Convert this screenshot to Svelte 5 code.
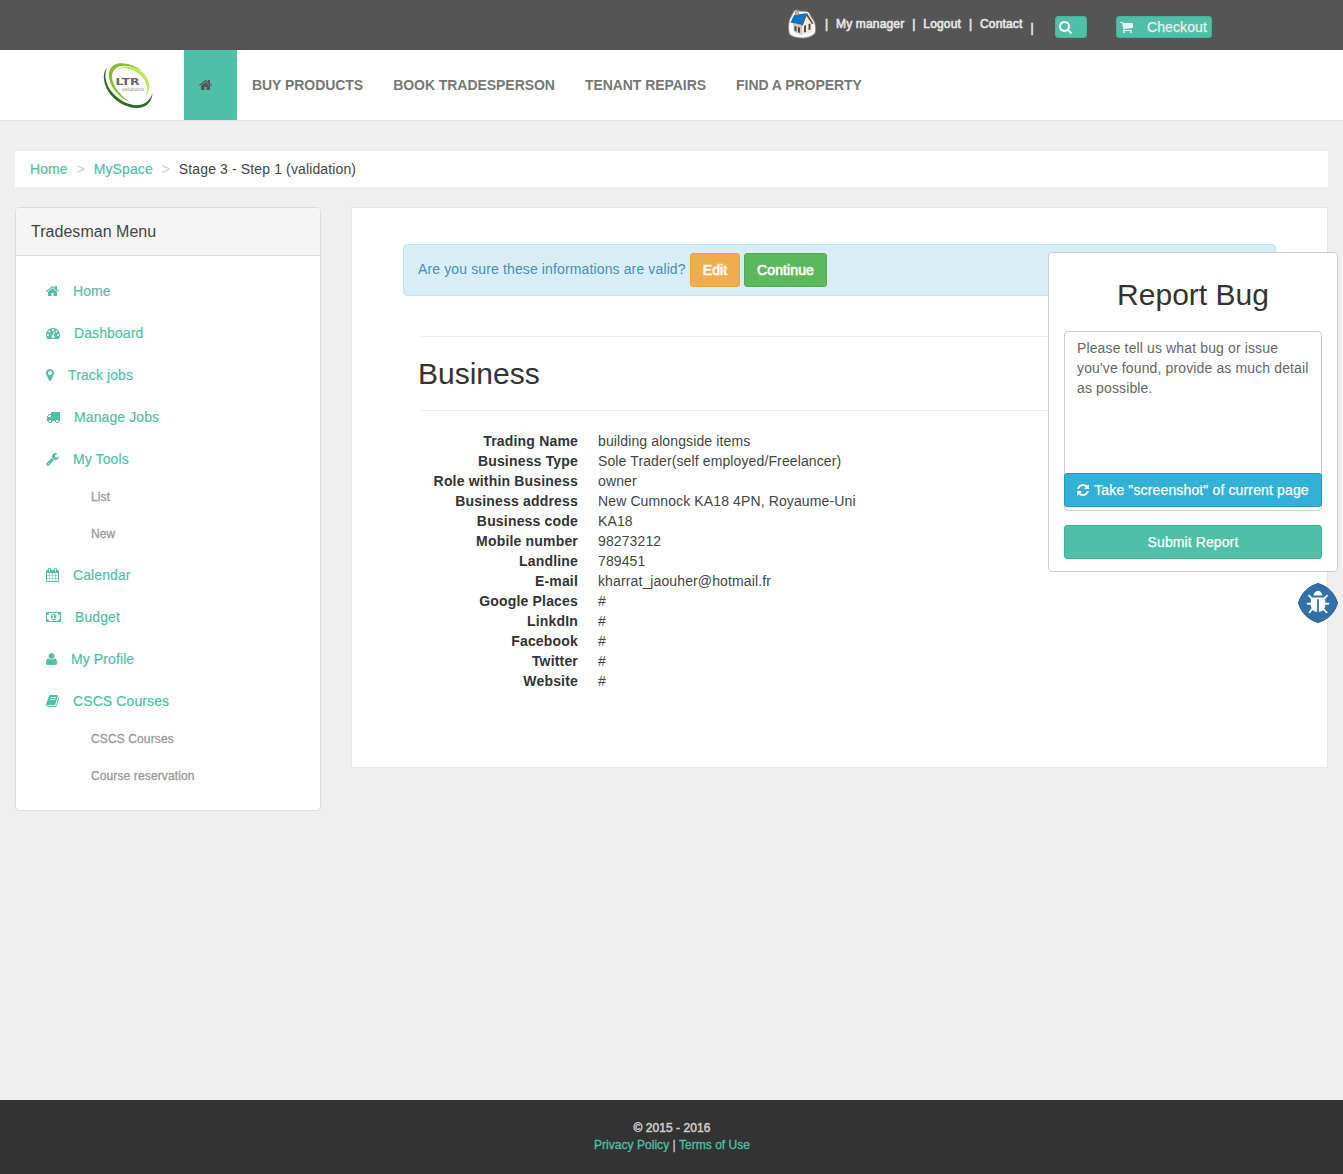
<script>
  const icons = {
    home: { w: 1664, d: 'M1408 992v480q0 26-19 45t-45 19h-384v-384h-256v384h-384q-26 0-45-19t-19-45v-480q0-1 .5-3t.5-3l575-474 575 474q1 2 1 6zm223-69l-62 74q-8 9-21 11h-3q-13 0-21-7l-692-577-692 577q-12 8-24 7-13-2-21-11l-62-74q-8-10-7-23.5t11-21.5l719-599q32-26 76-26t76 26l244 204v-195q0-14 9-23t23-9h192q14 0 23 9t9 23v408l219 182q10 8 11 21.5t-7 23.5z' },
    dashboard: { w: 1792, d: 'M384 1152q0-53-37.5-90.5t-90.5-37.5-90.5 37.5-37.5 90.5 37.5 90.5 90.5 37.5 90.5-37.5 37.5-90.5zm192-448q0-53-37.5-90.5t-90.5-37.5-90.5 37.5-37.5 90.5 37.5 90.5 90.5 37.5 90.5-37.5 37.5-90.5zm428 481l101-382q6-26-7.5-48.5t-38.5-29.5-48 6.5-30 39.5l-101 382q-60 5-107 43.5t-63 98.5q-20 77 20 146t117 89 146-20 89-117q16-60-6-117t-72-91zm660-33q0-53-37.5-90.5t-90.5-37.5-90.5 37.5-37.5 90.5 37.5 90.5 90.5 37.5 90.5-37.5 37.5-90.5zm-640-640q0-53-37.5-90.5t-90.5-37.5-90.5 37.5-37.5 90.5 37.5 90.5 90.5 37.5 90.5-37.5 37.5-90.5zm448 192q0-53-37.5-90.5t-90.5-37.5-90.5 37.5-37.5 90.5 37.5 90.5 90.5 37.5 90.5-37.5 37.5-90.5zm320 448q0 261-141 483-19 29-54 29h-1402q-35 0-54-29-141-221-141-483 0-182 71-348t191-286 286-191 348-71 348 71 286 191 191 286 71 348z' },
    marker: { w: 1024, d: 'M768 640q0-106-75-181t-181-75-181 75-75 181 75 181 181 75 181-75 75-181zm256 0q0 109-33 179l-364 774q-16 33-47.5 52t-67.5 19-67.5-19-46.5-52l-365-774q-33-70-33-179 0-212 150-362t362-150 362 150 150 362z' },
    truck: { w: 1792, d: 'M640 1408q0-52-38-90t-90-38-90 38-38 90 38 90 90 38 90-38 38-90zm-384-512h384v-256h-158q-13 0-22 9l-195 195q-9 9-9 22v30zm1280 512q0-52-38-90t-90-38-90 38-38 90 38 90 90 38 90-38 38-90zm256-1088v1024q0 15-4 26.5t-13.5 18.5-16.5 11.5-23.5 6-22.5 2-25.5 0-22.5-.5q0 106-75 181t-181 75-181-75-75-181h-384q0 106-75 181t-181 75-181-75-75-181h-64q-3 0-22.5.5t-25.5 0-22.5-2-23.5-6-16.5-11.5-13.5-18.5-4-26.5q0-26 19-45t45-19v-320q0-8-.5-35t0-38 2.5-34.5 6.5-37 14-30.5 22.5-30l198-198q19-19 50.5-32t58.5-13h160v-192q0-26 19-45t45-19h1024q26 0 45 19t19 45z' },
    wrench: { w: 1664, d: 'M384 1472q0-26-19-45t-45-19-45 19-19 45 19 45 45 19 45-19 19-45zm644-420l-682 682q-37 37-90 37-52 0-91-37l-106-108q-38-36-38-90 0-53 38-91l681-681q39 98 114.5 173.5t173.5 114.5zm634-435q0 39-23 106-47 134-164.5 217.5t-258.5 83.5q-185 0-316.5-131.5t-131.5-316.5 131.5-316.5 316.5-131.5q58 0 121.5 16.5t107.5 46.5q16 11 16 28t-16 28l-293 169v224l193 107q5-3 79-48.5t135.5-81 70.5-35.5q15 0 23.5 10t8.5 25z' },
    calendar: { w: 1664, d: 'M128 1664h288v-288h-288v288zm352 0h320v-288h-320v288zm-352-352h288v-320h-288v320zm352 0h320v-320h-320v320zm-352-384h288v-288h-288v288zm736 736h320v-288h-320v288zm-384-736h320v-288h-320v288zm768 736h288v-288h-288v288zm-384-352h320v-320h-320v320zm-352-864v-288q0-13-9.5-22.5t-22.5-9.5h-64q-13 0-22.5 9.5t-9.5 22.5v288q0 13 9.5 22.5t22.5 9.5h64q13 0 22.5-9.5t9.5-22.5zm736 864h288v-320h-288v320zm-384-384h320v-288h-320v288zm384 0h288v-288h-288v288zm32-480v-288q0-13-9.5-22.5t-22.5-9.5h-64q-13 0-22.5 9.5t-9.5 22.5v288q0 13 9.5 22.5t22.5 9.5h64q13 0 22.5-9.5t9.5-22.5zm384-64v1280q0 52-38 90t-90 38h-1408q-52 0-90-38t-38-90v-1280q0-52 38-90t90-38h128v-96q0-66 47-113t113-47h64q66 0 113 47t47 113v96h384v-96q0-66 47-113t113-47h64q66 0 113 47t47 113v96h128q52 0 90 38t38 90z' },
    money: { w: 1920, d: 'M768 1152h384v-96h-128v-448h-114l-148 137 77 80q42-37 55-57h2v288h-128v96zm512-256q0 70-21 142t-59.5 134-101.5 101-138 39-138-39-101.5-101-59.5-134-21-142 21-142 59.5-134 101.5-101 138-39 138 39 101.5 101 59.5 134 21 142zm512 256v-512q-106 0-181-75t-75-181h-1152q0 106-75 181t-181 75v512q106 0 181 75t75 181h1152q0-106 75-181t181-75zm128-832v1152q0 26-19 45t-45 19h-1792q-26 0-45-19t-19-45v-1152q0-26 19-45t45-19h1792q26 0 45 19t19 45z' },
    user: { w: 1408, d: 'M1408 1399q0 109-62.5 187t-150.5 78h-982q-88 0-150.5-78t-62.5-187q0-85 8.5-160.5t31.5-152 58.5-131 94-89 134.5-34.5q131 128 377 128t377-128q76 0 134.5 34.5t94 89 58.5 131 31.5 152 8.5 160.5zm-320-887q0 159-112.5 271.5t-271.5 112.5-271.5-112.5-112.5-271.5 112.5-271.5 271.5-112.5 271.5 112.5 112.5 271.5z' },
    book: { w: 1664, d: 'M1639 478q40 57 18 129l-275 906q-19 64-76.5 107.5t-122.5 43.5h-923q-77 0-148.5-53.5t-99.5-131.5q-24-67-2-127 0-4 3-27t4-37q1-8-3-21.5t-3-19.5q2-11 8-21t16.5-23.5 16.5-23.5q23-38 45-91.5t30-91.5q3-10 .5-30t-.5-28q3-11 17-28t17-23q21-36 42-92t25-90q1-9-2.5-32t.5-28q4-13 22-30.5t22-22.5q19-26 42.5-84.5t27.5-96.5q1-8-3-25.5t-2-26.5q2-8 9-18t18-23 17-21q8-12 16.5-30.5t15-35 16-36 19.5-32 26.5-23.5 36-11.5 47.5 5.5l-1 3q38-9 51-9h761q74 0 114 56t18 130l-274 906q-36 119-71.5 153.5t-128.5 34.5h-869q-27 0-38 15-11 16-1 43 24 70 144 70h923q29 0 56-15.5t35-41.5l300-987q7-22 5-57 38 15 59 43zm-1064 2q-4 13 2 22.5t20 9.5h608q13 0 25.5-9.5t16.5-22.5l21-64q4-13-2-22.5t-20-9.5h-608q-13 0-25.5 9.5t-16.5 22.5zm-83 256q-4 13 2 22.5t20 9.5h608q13 0 25.5-9.5t16.5-22.5l21-64q4-13-2-22.5t-20-9.5h-608q-13 0-25.5 9.5t-16.5 22.5z' },
    search: { w: 1664, d: 'M1152 832q0-185-131.5-316.5t-316.5-131.5-316.5 131.5-131.5 316.5 131.5 316.5 316.5 131.5 316.5-131.5 131.5-316.5zm512 832q0 52-38 90t-90 38q-54 0-90-38l-343-342q-179 124-399 124-143 0-273.5-55.5t-225-150-150-225-55.5-273.5 55.5-273.5 150-225 225-150 273.5-55.5 273.5 55.5 225 150 150 225 55.5 273.5q0 220-124 399l343 343q37 37 37 90z' },
    cart: { w: 1664, d: 'M640 1536q0 52-38 90t-90 38-90-38-38-90 38-90 90-38 90 38 38 90zm896 0q0 52-38 90t-90 38-90-38-38-90 38-90 90-38 90 38 38 90zm128-1088v512q0 24-16.5 42.5t-40.5 21.5l-1044 122q13 60 13 70 0 16-24 64h920q26 0 45 19t19 45-19 45-45 19h-1024q-26 0-45-19t-19-45q0-11 8-31.5t16-36 21.5-40 15.5-29.5l-177-823h-204q-26 0-45-19t-19-45 19-45 45-19h256q16 0 28.5 6.5t19.5 15.5 13 24.5 8 26 5.5 29.5 4.5 26h1201q26 0 45 19t19 45z' },
    refresh: { w: 1536, d: 'M1511 1056q0 5-1 7-64 268-268 434.5t-478 166.5q-146 0-282.5-55t-243.5-157l-129 129q-19 19-45 19t-45-19-19-45v-448q0-26 19-45t45-19h448q26 0 45 19t19 45-19 45l-137 137q71 66 161 102t187 36q134 0 250-65t186-179q11-17 53-117 8-23 30-23h192q13 0 22.5 9.5t9.5 22.5zm25-800v448q0 26-19 45t-45 19h-448q-26 0-45-19t-19-45 19-45l138-138q-148-137-349-137-134 0-250 65t-186 179q-11 17-53 117-8 23-30 23h-199q-13 0-22.5-9.5t-9.5-22.5v-7q65-268 270-434.5t480-166.5q146 0 284 55.5t245 156.5l130-129q19-19 45-19t45 19 19 45z' },
    bug: { w: 1664, d: 'M1632 960q0 26-19 45t-45 19h-224q0 171-67 290l208 209q19 19 19 45t-19 45q-18 19-45 19t-45-19l-198-197q-5 5-15 13t-42 28.5-65 36.5-82 29-97 13v-896h-128v896q-51 0-101.5-13.5t-87-33-66-39-43.5-32.5l-15-14-183 207q-20 21-48 21-24 0-43-16-19-18-20.5-44.5t15.5-46.5l202-227q-58-114-58-274h-224q-26 0-45-19t-19-45 19-45 45-19h224v-294l-173-173q-19-19-19-45t19-45 45-19 45 19l173 173h844l173-173q19-19 45-19t45 19 19 45-19 45l-173 173v294h224q26 0 45 19t19 45zm-480-576h-640q0-133 93.5-226.5t226.5-93.5 226.5 93.5 93.5 226.5z' }
  };

  const nav = ['BUY PRODUCTS', 'BOOK TRADESPERSON', 'TENANT REPAIRS', 'FIND A PROPERTY'];

  const menu = [
    { icon: 'home', label: 'Home' },
    { icon: 'dashboard', label: 'Dashboard' },
    { icon: 'marker', label: 'Track jobs' },
    { icon: 'truck', label: 'Manage Jobs' },
    { icon: 'wrench', label: 'My Tools', children: ['List', 'New'] },
    { icon: 'calendar', label: 'Calendar' },
    { icon: 'money', label: 'Budget' },
    { icon: 'user', label: 'My Profile' },
    { icon: 'book', label: 'CSCS Courses', children: ['CSCS Courses', 'Course reservation'] }
  ];

  const details = [
    ['Trading Name', 'building alongside items'],
    ['Business Type', 'Sole Trader(self employed/Freelancer)'],
    ['Role within Business', 'owner'],
    ['Business address', 'New Cumnock KA18 4PN, Royaume-Uni'],
    ['Business code', 'KA18'],
    ['Mobile number', '98273212'],
    ['Landline', '789451'],
    ['E-mail', 'kharrat_jaouher@hotmail.fr'],
    ['Google Places', '#'],
    ['LinkdIn', '#'],
    ['Facebook', '#'],
    ['Twitter', '#'],
    ['Website', '#']
  ];
</script>

{#snippet icon(name, size = 14)}
  <svg class="icon" width={(icons[name].w / 1792) * size} height={size} viewBox="0 0 {icons[name].w} 1792" aria-hidden="true">
    <path d={icons[name].d} />
  </svg>
{/snippet}

<div class="page">
  <header>
    <div class="topbar">
      <svg class="house" width="32" height="32" viewBox="0 0 32 32" aria-hidden="true">
        <path class="glow" d="M8 4Q10 2 13 3.500L20 4Q23 4 24 8L28 14Q30 21 28.500 25Q25 29 17 29.500Q8 29.500 4 26Q2 20 4 12Z" />
        <path d="M6.500 15L16 17L21 7L26.500 16V24L16 27L7.500 24Z" fill="#eeeae6" />
        <path d="M7 15L16 17V27L8 24Z" fill="#cfc6be" />
        <path d="M8.500 18l2 .5v5l-2-1zM12 19l2 .5v5.500l-2-1zM18 18l2-1v7l-2 .5zM22.500 16l2-.5v6l-2 .8z" fill="#5f4636" />
        <path d="M8 7L21 5L16 17L4.500 14.500Z" fill="#0f74c4" />
        <path d="M21 5L27.500 15.500L26 16L20.500 8L16.500 18L15.500 17Z" fill="#6b4a3a" />
        <path d="M9.500 4l2.500-.5.5 3-2.500 1z" fill="#d8d4d0" stroke="#555" stroke-width=".6" />
      </svg>
      <nav class="links">
        <i>|</i><a href="#manager">My manager</a><i>|</i><a href="#logout">Logout</a><i>|</i><a href="#contact">Contact</a><i class="last">|</i>
      </nav>
      <button class="tag search" aria-label="Search">{@render icon('search')}</button>
      <button class="tag checkout">{@render icon('cart')}<span>Checkout</span></button>
    </div>
    <div class="navbar">
      <svg class="logo" width="50" height="48" viewBox="0 0 50 48" aria-hidden="true">
        <path d="M4.500 5.500C1 11 1.500 21 9 30C17 40 28 44 36 43C43 42 47 38 49.500 31C49 40 43 46 34 46C23 46 11 39 5 29C-1 19 0 9 4.500 5.500Z" fill="#2f6b2a" />
        <path d="M39 9C31 2 17-1 11 3C3 8 5 20 12 29C17 35 22 38 27 40C17 33 9 24 9 14C10 2 24 1 39 9Z" fill="#86bc2e" />
        <path d="M14 8.500C20 4 30 7 37 13C45 20 46 29 42 35C49 28 47 17 39 10C30 3 19 3 14 8.500Z" fill="#b4e85e" />
        <text class="logo-name" x="12.500" y="23" textLength="24" lengthAdjust="spacingAndGlyphs">LTR</text>
        <text class="logo-sub" x="19" y="28.500" textLength="22" lengthAdjust="spacingAndGlyphs">solutions</text>
      </svg>
      <a class="tab" href="#home" aria-label="Home">{@render icon('home')}</a>
      {#each nav as item}
        <a class="nav-item" href="#nav">{item}</a>
      {/each}
    </div>
  </header>

  <div class="breadcrumb">
    <a href="#home">Home</a><span class="sep">&gt;</span><a href="#space">MySpace</a><span class="sep">&gt;</span><span class="current">Stage 3 - Step 1 (validation)</span>
  </div>

  <div class="columns">
    <aside>
      <h4>Tradesman Menu</h4>
      <ul>
        {#each menu as item}
          <li>
            <a class="item" href="#menu">{@render icon(item.icon)}<span>{item.label}</span></a>
            {#each item.children ?? [] as child}
              <a class="sub" href="#menu">{child}</a>
            {/each}
          </li>
        {/each}
      </ul>
    </aside>

    <main>
      <div class="alert">
        <span>Are you sure these informations are valid?</span>
        <button class="btn edit">Edit</button>
        <button class="btn continue">Continue</button>
      </div>
      <section>
        <h2>Business</h2>
        <dl>
          {#each details as [term, value]}
            <dt>{term}</dt>
            <dd>{value}</dd>
          {/each}
        </dl>
      </section>
    </main>
  </div>

  <footer>
    <p>© 2015 - 2016</p>
    <p><a href="#privacy">Privacy Policy</a> | <a href="#terms">Terms of Use</a></p>
  </footer>

  <div class="report">
    <div class="dialog">
      <h2>Report Bug</h2>
      <div class="field">
        <p>Please tell us what bug or issue you've found, provide as much detail as possible.</p>
        <button class="btn shot">{@render icon('refresh')}<span>Take "screenshot" of current page</span></button>
      </div>
      <button class="btn submit">Submit Report</button>
    </div>
    <button class="bug" aria-label="Report a bug">
      <svg width="40" height="40" viewBox="0 0 40 40" aria-hidden="true">
        <path class="badge" d="M20 .5C29.500 3 37 10.500 39.500 20C37 29.500 29.500 37 20 39.500C10.500 37 3 29.500 .5 20C3 10.500 10.500 3 20 .5Z" />
        <g transform="translate(8.300 7.200) scale(.0141)"><path class="bug-shape" d={icons.bug.d} /></g>
      </svg>
    </button>
  </div>
</div>

<style>
  :global(body) { margin: 0; }
  * { box-sizing: border-box; }
  .page {
    display: flex;
    flex-direction: column;
    height: 1174px;
    background: #efefef;
    color: #444;
    font: 14px/20px "Liberation Sans", Arial, sans-serif;
  }
  a { color: #50bfa7; text-decoration: none; }
  p, h2, h4, ul, dl, dd { margin: 0; padding: 0; }
  h2, h4 { font-weight: 400; }
  button { font: inherit; cursor: pointer; }
  .icon { display: block; flex: none; fill: currentColor; overflow: visible; }

  .topbar { display: flex; height: 50px; padding-left: 786px; background: #555; }
  .house { margin-top: 8px; }
  .glow { fill: #fff; stroke: #fff; stroke-opacity: .35; stroke-width: 2; }
  .links { display: flex; width: 241px; margin-left: 7px; padding-top: 14px; color: #e7e7e7; font-size: 12px; letter-spacing: .16px; -webkit-text-stroke: .6px; white-space: nowrap; }
  .links a { color: #e7e7e7; margin: 0 8px 0 7px; }
  .links i { width: 4px; font-style: normal; }
  .links .last { padding-top: 4px; }
  .tag { display: flex; align-items: center; height: 22px; margin-top: 16px; padding: 0 3px; border: 1px solid #43b599; border-radius: 3px; background: #50bfa7; color: #eee; }
  .search { width: 32px; margin-left: -11px; color: #fff; }
  .checkout { width: 96px; margin-left: 29px; letter-spacing: .1px; -webkit-text-stroke: .25px; }
  .checkout span { margin-left: 14px; }

  .navbar { display: flex; height: 71px; padding-left: 103px; border-bottom: 1px solid #e4e4e4; background: #fff; }
  .logo { margin: 12px 31px 0 0; }
  .logo-name { font: bold 9px "DejaVu Sans", sans-serif; fill: #666; }
  .logo-sub { font: 5px "DejaVu Sans", sans-serif; fill: #8a8070; }
  .tab { display: flex; align-items: center; width: 53px; padding-left: 15px; background: #50bfa7; color: #555; }
  .nav-item { padding: 25px 15px; color: #777; font-weight: 700; letter-spacing: -.05px; }

  .breadcrumb { display: flex; height: 36px; margin: 30px 15px 20px; padding: 8px 15px; background: #fff; letter-spacing: .1px; }
  .breadcrumb a { -webkit-text-stroke: .2px; }
  .breadcrumb .current { letter-spacing: .13px; }
  .sep { width: 26px; text-align: center; color: #ccc; }

  .columns { display: flex; align-items: flex-start; gap: 30px; padding: 0 15px; }
  aside { width: 306px; height: 604px; border: 1px solid #ddd; border-radius: 4px; background: #fff; overflow: hidden; }
  h4 { height: 48px; padding: 14px 15px; border-bottom: 1px solid #ddd; background: #f5f5f5; font-size: 16px; letter-spacing: .03px; }
  ul { padding: 14px 0 0 30px; list-style: none; }
  .item { display: flex; align-items: center; gap: 14px; height: 42px; letter-spacing: .1px; -webkit-text-stroke: .2px; }
  .sub { display: block; height: 37px; padding: 7px 0 0 45px; color: #999; font-size: 12px; letter-spacing: .12px; -webkit-text-stroke: .3px; }

  main { width: 977px; height: 561px; padding: 36px 51px; border: 1px solid #e7e7e7; background: #fff; }
  .alert { display: flex; height: 52px; padding: 8px 14px; border: 1px solid #bce8f1; border-radius: 4px; background: #d9edf7; color: #468fb3; letter-spacing: .13px; }
  .alert > span { width: 272px; padding-top: 6px; white-space: nowrap; }
  .btn { display: flex; align-items: center; justify-content: center; height: 34px; padding: 0 11px; border: 1px solid; border-radius: 3px; color: #fff; letter-spacing: .1px; -webkit-text-stroke: .25px; white-space: nowrap; }
  .edit { width: 50px; margin-right: 4px; border-color: #eea236; background: #f0ad4e; -webkit-text-stroke: .65px; }
  .continue { width: 83px; border-color: #4cae4c; background: #5cb85c; -webkit-text-stroke: .65px; }
  section { margin: 40px 15px 0; border-top: 1px solid #eee; }
  h2 { color: #333; font-size: 30px; line-height: 33px; }
  section h2 { height: 74px; padding-top: 20px; border-bottom: 1px solid #eee; }
  dl { display: grid; grid-template-columns: 160px 1fr; column-gap: 20px; padding-top: 20px; }
  dt { color: #333; font-weight: 700; text-align: right; letter-spacing: .18px; }
  dd { letter-spacing: .12px; }

  footer { height: 74px; margin-top: auto; padding: 20px 0 0 1px; background: #333; color: #ccc; font-size: 12px; line-height: 17px; text-align: center; letter-spacing: .04px; -webkit-text-stroke: .3px; }
  footer p:first-child { -webkit-text-stroke: .5px; }

  .report { position: fixed; top: 252px; right: 5px; width: 290px; }
  .dialog { height: 320px; padding: 25px 15px 0; border: 1px solid #ccc; border-radius: 4px; background: #fff; }
  .dialog h2 { text-align: center; }
  .field { display: flex; flex-direction: column; justify-content: space-between; height: 180px; margin: 20px 0 14px; padding-bottom: 3px; border: 1px solid #ccc; border-radius: 4px; color: #666; letter-spacing: .13px; }
  .field p { padding: 6px 8px 0 12px; }
  .shot { margin: 0 -1px; gap: 5px; border-color: #2498be; background: #31b0d8; letter-spacing: .14px; }
  .submit { width: 100%; border-color: #42b297; background: #50bfa7; }
  .bug { display: block; width: 40px; height: 40px; margin: 11px 0 0 auto; padding: 0; border: 0; background: none; }
  .bug svg { display: block; }
  .badge { fill: #3071a9; stroke: #285e8e; }
  .bug-shape { fill: #fff; }
</style>
